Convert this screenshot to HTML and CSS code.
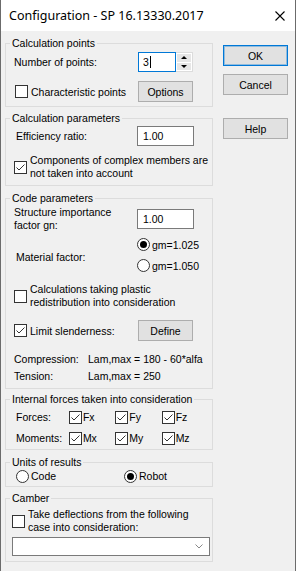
FILE: index.html
```html
<!DOCTYPE html>
<html lang="en">
<head>
    <meta charset="UTF-8" />
    <title>Configuration - SP 16.13330.2017</title>
    <link rel="stylesheet" href="styles.css">
</head>
<body>

<div class="window">
    <div class="titlebar">
        <span class="title">Configuration - SP 16.13330.2017</span>
        <svg class="close" width="10" height="10" viewBox="0 0 10 10">
            <path d="M0.5 0.5L9.5 9.5M9.5 0.5L0.5 9.5" stroke="#000" stroke-width="1.1" fill="none"/>
        </svg>
    </div>

    <div class="client">
        <div class="groups">

            <!-- Calculation points -->
            <fieldset class="group g-points">
                <legend>Calculation points</legend>
                <div class="row r-count">
                    <span class="label">Number of points:</span>
                    <div class="spin">
                        <div class="spin-input">3<span class="caret"></span></div>
                        <div class="spin-btns">
                            <span class="spin-btn"><span class="tri up"></span></span>
                            <span class="spin-btn"><span class="tri down"></span></span>
                        </div>
                    </div>
                </div>
                <div class="row r-char">
                    <div class="check label"><span class="box"></span><span>Characteristic points</span></div>
                    <button class="btn small">Options</button>
                </div>
            </fieldset>

            <!-- Calculation parameters -->
            <fieldset class="group g-params">
                <legend>Calculation parameters</legend>
                <div class="row r-eff">
                    <span class="label ind">Efficiency ratio:</span>
                    <div class="edit">1.00</div>
                </div>
                <div class="check multi r-comp">
                    <span class="box on"><svg width="11" height="11" viewBox="0 0 11 11"><path d="M1.5 5.5L4 8L9.5 2.5" stroke="#333" fill="none"/></svg></span>
                    <span>Components of complex members are<br>not taken into account</span>
                </div>
            </fieldset>

            <!-- Code parameters -->
            <fieldset class="group g-code">
                <legend>Code parameters</legend>
                <div class="row r-gn">
                    <span class="label two">Structure importance<br>factor gn:</span>
                    <div class="edit">1.00</div>
                </div>
                <div class="row r-mat">
                    <span class="label ind mat">Material factor:</span>
                    <div class="radios">
                        <div class="opt"><span class="radio on"></span>gm=1.025</div>
                        <div class="opt"><span class="radio"></span>gm=1.050</div>
                    </div>
                </div>
                <div class="check multi r-plastic">
                    <span class="box"></span>
                    <span>Calculations taking plastic<br>redistribution into consideration</span>
                </div>
                <div class="row r-limit">
                    <div class="check label"><span class="box on"><svg width="11" height="11" viewBox="0 0 11 11"><path d="M1.5 5.5L4 8L9.5 2.5" stroke="#333" fill="none"/></svg></span><span>Limit slenderness:</span></div>
                    <button class="btn small">Define</button>
                </div>
                <div class="row r-lam">
                    <span class="lam-name">Compression:</span>
                    <span>Lam,max = 180 - 60*alfa</span>
                </div>
                <div class="row r-lam">
                    <span class="lam-name">Tension:</span>
                    <span>Lam,max = 250</span>
                </div>
            </fieldset>

            <!-- Internal forces -->
            <fieldset class="group g-forces">
                <legend>Internal forces taken into consideration</legend>
                <div class="row r-force">
                    <span class="f-name">Forces:</span>
                    <div class="check f-cell"><span class="box on"><svg width="11" height="11" viewBox="0 0 11 11"><path d="M1.5 5.5L4 8L9.5 2.5" stroke="#333" fill="none"/></svg></span>Fx</div>
                    <div class="check f-cell"><span class="box on"><svg width="11" height="11" viewBox="0 0 11 11"><path d="M1.5 5.5L4 8L9.5 2.5" stroke="#333" fill="none"/></svg></span>Fy</div>
                    <div class="check f-cell"><span class="box on"><svg width="11" height="11" viewBox="0 0 11 11"><path d="M1.5 5.5L4 8L9.5 2.5" stroke="#333" fill="none"/></svg></span>Fz</div>
                </div>
                <div class="row r-force r-mom">
                    <span class="f-name">Moments:</span>
                    <div class="check f-cell"><span class="box on"><svg width="11" height="11" viewBox="0 0 11 11"><path d="M1.5 5.5L4 8L9.5 2.5" stroke="#333" fill="none"/></svg></span>Mx</div>
                    <div class="check f-cell"><span class="box on"><svg width="11" height="11" viewBox="0 0 11 11"><path d="M1.5 5.5L4 8L9.5 2.5" stroke="#333" fill="none"/></svg></span>My</div>
                    <div class="check f-cell"><span class="box on"><svg width="11" height="11" viewBox="0 0 11 11"><path d="M1.5 5.5L4 8L9.5 2.5" stroke="#333" fill="none"/></svg></span>Mz</div>
                </div>
            </fieldset>

            <!-- Units -->
            <fieldset class="group g-units">
                <legend>Units of results</legend>
                <div class="row r-units">
                    <div class="opt u-cell"><span class="radio"></span>Code</div>
                    <div class="opt"><span class="radio on"></span>Robot</div>
                </div>
            </fieldset>

            <!-- Camber -->
            <fieldset class="group g-camber">
                <legend>Camber</legend>
                <div class="check multi r-camber">
                    <span class="box"></span>
                    <span>Take deflections from the following<br>case into consideration:</span>
                </div>
                <div class="combo">
                    <svg width="8" height="5" viewBox="0 0 8 5"><path d="M0.5 0.5L4 4L7.5 0.5" stroke="#888" fill="none"/></svg>
                </div>
            </fieldset>

        </div>

        <div class="buttons">
            <button class="btn default">OK</button>
            <button class="btn b-cancel">Cancel</button>
            <button class="btn b-help">Help</button>
        </div>
    </div>
</div>

</body>
</html>
```

FILE: styles.css
```css
* {
    box-sizing: border-box;
}
body {
    margin: 0;
    background-color: #f0f0f0;
    font-family: 'Liberation Sans', Arial, sans-serif;
    font-size: 10.5px;
    color: #000;
}
.window {
    width: 296px;
    height: 571px;
    border-left: 1px solid #6b6b6b;
    border-right: 1px solid #6b6b6b;
    background-color: #f0f0f0;
}
.titlebar {
    height: 31px;
    background-color: #fff;
    display: flex;
    align-items: center;
    justify-content: space-between;
    padding: 0 10px 0 8px;
}
.title {
    font-family: 'Noto Sans', 'Liberation Sans', sans-serif;
    font-size: 12.5px;
}
.client {
    display: flex;
    padding-left: 4px;
}
.groups {
    width: 208px;
    display: flex;
    flex-direction: column;
}
.buttons {
    margin-left: 10px;
    width: 65px;
    display: flex;
    flex-direction: column;
    padding-top: 14px;
}
.btn {
    height: 21px;
    border: 1px solid #adadad;
    background-color: #e1e1e1;
    font: inherit;
    color: #000;
    padding: 0;
}
.buttons .btn {
    width: 65px;
}
.btn.default {
    border-color: #0078d7;
    box-shadow: inset 0 0 0 1px rgba(0, 120, 215, 0.35);
}
.b-cancel {
    margin-top: 8px;
}
.b-help {
    margin-top: 23px;
}
.btn.small {
    width: 55px;
    margin-left: 1px;
}

/* group boxes */
.group {
    margin: 0;
    min-width: 0;
    border: 1px solid #dcdcdc;
    padding: 0 4px 4px 8px;
}
.group legend {
    padding: 0 2px;
    margin-left: -4px;
    line-height: 13px;
}
.g-points { margin-top: 6px; }
.g-params { margin-top: 5px; padding-bottom: 5px; }
.g-code { margin-top: 6px; }
.g-forces { margin-top: 4px; padding-bottom: 2px; }
.g-units { margin-top: 6px; padding-bottom: 3px; }
.g-camber { margin-top: 5px; padding: 0 4px 5px 6px; }
.g-camber legend { margin-left: -2px; }

.row {
    display: flex;
    align-items: center;
}
.label {
    width: 123px;
    flex: none;
}
.label.ind {
    padding-left: 2px;
}
.label.two {
    line-height: 13px;
}

/* edits */
.edit {
    width: 57px;
    height: 20px;
    border: 1px solid #7a7a7a;
    background-color: #fff;
    padding-left: 5px;
    display: flex;
    align-items: center;
}
.spin {
    display: flex;
    margin-left: 1px;
}
.spin-input {
    width: 38px;
    height: 20px;
    border: 1px solid #0078d7;
    background-color: #fff;
    padding-left: 4px;
    display: flex;
    align-items: center;
}
.caret {
    width: 1px;
    height: 12px;
    background-color: #000;
    margin-left: 1px;
}
.spin-btns {
    width: 17px;
    height: 20px;
    display: flex;
    flex-direction: column;
    border: 1px solid #dcdcdc;
    border-left: none;
    background-color: #fff;
    padding: 1px;
    gap: 1px;
}
.spin-btn {
    flex: 1;
    background-color: #e6e6e6;
    display: flex;
    align-items: center;
    justify-content: center;
}
.tri {
    width: 0;
    height: 0;
    border-left: 3px solid transparent;
    border-right: 3px solid transparent;
}
.tri.up { border-bottom: 3px solid #000; }
.tri.down { border-top: 3px solid #000; }

/* checkboxes & radios */
.check {
    display: flex;
    align-items: center;
}
.box {
    width: 13px;
    height: 13px;
    flex: none;
    border: 1px solid #333;
    background-color: #fff;
    margin-right: 3px;
    display: flex;
}
.check.multi {
    line-height: 13px;
}
.opt {
    display: flex;
    align-items: center;
    height: 21px;
}
.radio {
    width: 13px;
    height: 13px;
    border: 1px solid #333;
    border-radius: 50%;
    background-color: #fff;
    margin-right: 2px;
    display: flex;
    align-items: center;
    justify-content: center;
}
.radio.on::after {
    content: '';
    width: 7px;
    height: 7px;
    border-radius: 50%;
    background-color: #000;
}

/* row spacing */
.r-count { margin-top: 2px; height: 20px; }
.r-char { margin-top: 9px; height: 21px; }
.r-char .check { padding-left: 1px; }
.r-eff { margin-top: 1px; height: 20px; }
.r-comp { margin-top: 8px; }
.r-gn { margin-top: 1px; height: 26px; }
.r-mat { margin-top: 2px; }
.label.mat { margin-top: 4px; }
.r-plastic { margin-top: 7px; }
.r-limit { margin-top: 11px; height: 21px; }
.r-lam { height: 17px; }
.r-limit + .r-lam { margin-top: 9px; }
.lam-name {
    width: 74px;
}
.r-force { margin-top: 2px; height: 18px; padding-left: 2px; }
.r-mom { margin-top: 3px; }
.f-name {
    width: 57px;
}
.f-cell {
    width: 50px;
}
.f-cell .box {
    margin-right: 1px;
}
.r-units { height: 14px; padding-left: 2px; }
.u-cell { width: 108px; }
.r-camber { margin-top: 3px; }
.combo {
    margin-top: 3px;
    width: 198px;
    height: 19px;
    border: 1px solid #7a7a7a;
    background-color: #fff;
    display: flex;
    align-items: center;
    justify-content: flex-end;
    padding-right: 6px;
}
```
